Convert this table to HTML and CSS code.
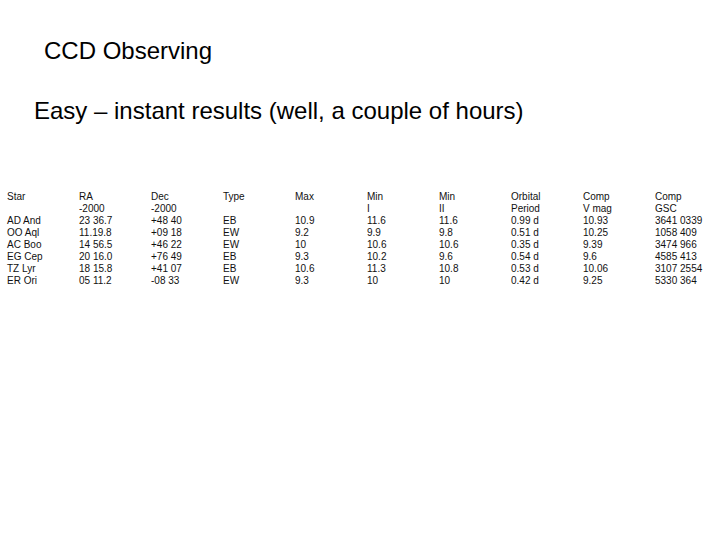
FILE: index.html
```html
<!DOCTYPE html>
<html>
<head>
<meta charset="utf-8">
<link rel="stylesheet" href="styles.css">
</head>
<body>
<div class="slide">
  <h1 class="title">CCD Observing</h1>
  <h2 class="subtitle">Easy – instant results (well, a couple of hours)</h2>
  <div class="grid">
    <div>Star</div><div>RA</div><div>Dec</div><div>Type</div><div>Max</div><div>Min</div><div>Min</div><div>Orbital</div><div>Comp</div><div>Comp</div>
    <div></div><div>-2000</div><div>-2000</div><div></div><div></div><div>I</div><div>II</div><div>Period</div><div>V mag</div><div>GSC</div>
    <div>AD And</div><div>23 36.7</div><div>+48 40</div><div>EB</div><div>10.9</div><div>11.6</div><div>11.6</div><div>0.99 d</div><div>10.93</div><div>3641 0339</div>
    <div>OO Aql</div><div>11.19.8</div><div>+09 18</div><div>EW</div><div>9.2</div><div>9.9</div><div>9.8</div><div>0.51 d</div><div>10.25</div><div>1058 409</div>
    <div>AC Boo</div><div>14 56.5</div><div>+46 22</div><div>EW</div><div>10</div><div>10.6</div><div>10.6</div><div>0.35 d</div><div>9.39</div><div>3474 966</div>
    <div>EG Cep</div><div>20 16.0</div><div>+76 49</div><div>EB</div><div>9.3</div><div>10.2</div><div>9.6</div><div>0.54 d</div><div>9.6</div><div>4585 413</div>
    <div>TZ Lyr</div><div>18 15.8</div><div>+41 07</div><div>EB</div><div>10.6</div><div>11.3</div><div>10.8</div><div>0.53 d</div><div>10.06</div><div>3107 2554</div>
    <div>ER Ori</div><div>05 11.2</div><div>-08 33</div><div>EW</div><div>9.3</div><div>10</div><div>10</div><div>0.42 d</div><div>9.25</div><div>5330 364</div>
  </div>
</div>
</body>
</html>
```

FILE: styles.css
```css
html, body {
  margin: 0;
  padding: 0;
  background: #ffffff;
}
.slide {
  width: 720px;
  height: 540px;
  display: flex;
  flex-direction: column;
  font-family: "Liberation Sans", Arial, sans-serif;
  color: #000;
}
.title {
  margin: 37px 0 0 44px;
  font-size: 24px;
  font-weight: normal;
  line-height: 28px;
}
.subtitle {
  margin: 32px 0 0 34px;
  font-size: 24px;
  font-weight: normal;
  line-height: 28px;
}
.grid {
  margin: 66px 0 0 7px;
  display: grid;
  grid-template-columns: repeat(10, 72px);
  grid-auto-rows: 12px;
  font-size: 10px;
  line-height: 12px;
  color: #111;
  white-space: nowrap;
}
```
